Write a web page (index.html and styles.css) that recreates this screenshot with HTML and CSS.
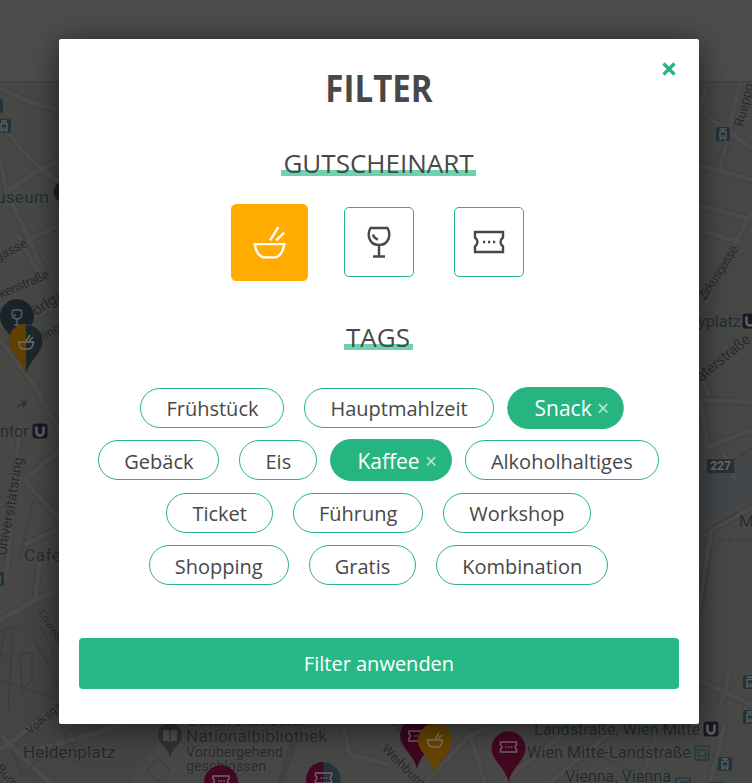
FILE: index.html
```html
<!DOCTYPE html>
<html lang="de">
<head>
<meta charset="utf-8">
<title>Filter</title>
<link rel="stylesheet" href="styles.css">
</head>
<body>
<svg class="map" width="752" height="783" viewBox="0 0 752 783" aria-hidden="true">
  <defs>
    <linearGradient id="bar" x1="0" y1="0" x2="0" y2="1"><stop offset="0" stop-color="#3c3c3c"/><stop offset="1" stop-color="#484847"/></linearGradient>
    <path id="pin" d="M0 34C-2 24-9 18-14 10A17 17 0 1 1 14 10C9 18 2 24 0 34Z"/>
    <g id="bowl" fill="none" stroke-width="1.5"><path d="M-7.500 0H7.500C7 4 5 7 2.500 7H-2.500C-5 7-7 4-7.500 0ZM0-1L4-7M3-1L7-5"/></g>
    <g id="glass" fill="none" stroke-width="1.4"><path d="M-4-7H4C6-3 5 2 0 2S-6-3-4-7ZM0 2V8M-3 8H3M-3-3Q-2-1-1-1"/></g>
    <g id="ticket" fill="none" stroke-width="1.5"><path d="M-8-5H8V-2Q5 0 8 2V5H-8V2Q-5 0-8-2Z"/><path d="M-3 0H4" stroke-dasharray="1.500 1.200"/></g>
    <g id="tram"><rect x="-7" y="-7" width="14" height="14" rx="2" fill="#22343a"/><path d="M-3-5H3M0-5V-3M-3-2.500H3V4H-3ZM-2 5L-3 6M2 5L3 6" stroke="#59605f" stroke-width="1.400" fill="none"/><path d="M-2 2H2" stroke="#59605f"/></g>
    <g id="metro"><rect x="-7.500" y="-7.500" width="15" height="15" rx="3" fill="#181a24"/><path d="M-3.500-4.500V1A3.500 3.500 0 0 0 3.500 1V-4.500" stroke="#606166" stroke-width="2.600" fill="none"/></g>
  </defs>
  <rect width="752" height="783" fill="#474746"/>
  <path d="M0 625L40 598L60 590V722L170 724L130 783H0Z" fill="#434543"/>
  <path d="M699 485L752 446V500L699 520Z" fill="#434648"/>
  <g class="road-edge">
    <path d="M0 88L28 101L60 111M7 130Q22 155 60 183M0 160L7 192L43 270M7 192L35 172L60 160M24 242L60 225M0 340L34 385L60 430M18 235L45 285M30 320L60 305M20 425L6 580M24 480L60 450M24 545L60 528M24 480L60 520M40 560L35 600L0 620M35 600L60 590M0 750L60 705L125 724M20 755L125 724M0 735L50 783"/>
    <path d="M708 82L699 110M699 110L752 148M699 165L752 180M699 205L752 220M699 230L740 242M752 210L672 370M740 82L720 170M699 400L752 402M699 450L752 430M708 450L700 400M722 450L735 480M711 530L699 620M699 680L752 705M721 705L729 675M710 530L752 508M699 370L709 395"/>
    <path d="M315 724L300 724L280 783M343 724L350 755L390 765M425 783L470 735L500 724M470 735L485 783M502 783L575 724M550 783L620 724M640 783L660 724M725 724L710 783"/>
  </g>
  <g class="road">
    <path d="M0 88L28 101L60 111M7 130Q22 155 60 183M0 160L7 192L43 270M7 192L35 172L60 160M24 242L60 225M0 340L34 385L60 430M18 235L45 285M30 320L60 305M20 425L6 580M24 480L60 450M24 545L60 528M24 480L60 520M40 560L35 600L0 620M35 600L60 590M0 750L60 705L125 724M20 755L125 724M0 735L50 783"/>
    <path d="M708 82L699 110M699 110L752 148M699 165L752 180M699 205L752 220M699 230L740 242M752 210L672 370M740 82L720 170M699 400L752 402M699 450L752 430M708 450L700 400M722 450L735 480M711 530L699 620M699 680L752 705M721 705L729 675M710 530L752 508M699 370L709 395"/>
    <path d="M343 724L350 755L390 765M425 783L470 735L500 724M470 735L485 783M502 783L575 724M550 783L620 724M640 783L660 724M725 724L710 783"/>
  </g>
  <path class="path" d="M0 632Q15 622 28 634T60 690M4 631L0 660M13 630L8 710M20 653H32V680L22 690ZM0 655Q12 650 10 668M33 630Q40 620 50 645T40 655ZM0 680L60 700M60 724L80 757M12 750L35 725L55 745L22 775ZM74 731Q80 735 75 742Q66 748 64 738Q66 730 74 731M147 770L158 758L170 770L158 782Z"/>
  <path class="dash" d="M60 425L42 400M60 470L38 485L56 505M33 500L20 560M720 540H752M565 740L600 783M590 750L650 783"/>
  <path d="M699 482L752 448M699 535L740 511M711 550L699 625" fill="none" stroke="#3d3d39" stroke-width="1.300"/>
  <path d="M17 407L26 402M21 401L26 402L23 407" fill="none" stroke="#343434" stroke-width="2"/>
  <g class="label">
    <text x="-4" y="203" class="l17 teal" textLength="53">useum</text>
    <text transform="translate(-13 267) rotate(-27)" class="l13">rggasse</text>
    <text transform="translate(-5 301) rotate(-23)" class="l13" textLength="60">irkenstraße</text>
    <text transform="translate(36 316) rotate(-32)" class="l15">örlgasse</text>
    <text transform="translate(44 341) rotate(-31)" class="l13">lingasse</text>
    <text x="0" y="437" class="l16 teal">ntor</text>
    <text transform="translate(6 556) rotate(-80)" class="l14">Universitätsring</text>
    <text x="24" y="561" class="l17 grey" textLength="37">Café</text>
    <text transform="translate(38 613) rotate(57)" class="l11">Löwelstraße</text>
    <text transform="translate(30 735) rotate(-40)" class="l12">Volksgarten</text>
    <text transform="translate(-5 769) rotate(48)" class="l13">Burgring</text>
    <text x="23" y="758" class="l17 green" textLength="92">Heldenplatz</text>
    <text x="186" y="726" class="l17 grey">Österreichische</text>
    <text x="186" y="742" class="l17 grey" textLength="141">Nationalbibliothek</text>
    <text x="186" y="757" class="l14 grey">Vorübergehend</text>
    <text x="186" y="771" class="l14 grey">geschlossen</text>
    <text transform="translate(381 750) rotate(44)" class="l13">Weihburggasse</text>
    <text transform="translate(391 724) rotate(35)" class="l13">straße</text>
    <text x="534" y="735" class="l16 teal" textLength="166">Landstraße, Wien Mitte</text>
    <text x="527" y="758" class="l16 teal" textLength="164">Wien Mitte-Landstraße</text>
    <text x="565" y="782" class="l16 teal" textLength="106">Vienna, Vienna</text>
    <text transform="translate(743 127) rotate(-76)" class="l13">Rueppgasse</text>
    <text transform="translate(705 301) rotate(-57)" class="l13" textLength="62">Zirkusgasse</text>
    <text x="698" y="327" class="l16 teal">yplatz</text>
    <text transform="translate(701 382) rotate(-39)" class="l15" textLength="65">aterstraße</text>
    <text x="739" y="527" class="l17 grey">Museum</text>
  </g>
  <rect x="707" y="459" width="27" height="14" fill="#263236"/><text x="720.500" y="470" class="route">227</text>
  <use href="#tram" x="4" y="126"/><use href="#tram" x="-4" y="106"/><use href="#tram" x="723" y="134"/>
  <use href="#tram" x="750" y="682"/><use href="#tram" x="750" y="717"/><use href="#tram" x="725" y="764"/><use href="#tram" x="-3" y="579"/>
  <use href="#metro" x="40" y="431"/><use href="#metro" x="750" y="321"/><use href="#metro" x="711" y="729"/>
  <g fill="none" stroke="#2b3d42" stroke-width="2"><rect x="695" y="746" width="14" height="14" rx="2"/><path d="M698 750H706V756H698ZM699 758V760M705 758V760"/><rect x="676" y="778" width="14" height="14" rx="2"/><path d="M680 782H687"/></g>
  <rect x="709" y="782" width="14" height="4" fill="#253a40"/>
  <circle cx="65" cy="192" r="11" fill="#17222a"/>
  <path d="M170 758C169 748 158 744 158 735A12 12 0 1 1 182 735C182 744 171 748 170 758Z" fill="#303131"/>
  <path d="M163 730Q167 729 169.500 731V742Q167 740 163 741ZM177 730Q173 729 170.500 731V742Q173 740 177 741Z" fill="#515252"/>
  <g stroke="#5b6265">
    <use href="#pin" x="17" y="316" fill="#18232a" stroke="none"/><use href="#glass" x="17" y="317"/>
    <use href="#pin" x="26" y="341" fill="#1d272e" stroke="#5d4b32" stroke-width=".6"/>
    <path d="M26 375C24 365 17 359 12 351A17 17 0 0 1 26 324Z" fill="#633f02" stroke="none"/><use href="#bowl" x="26" y="342" stroke="#777063"/>
  </g>
  <g stroke="#796170">
    <use href="#pin" x="417" y="735" fill="#3d061e" stroke="none"/><use href="#ticket" x="417" y="736"/>
    <use href="#pin" x="435" y="740" fill="#664500" stroke="none"/><use href="#bowl" x="435" y="740" stroke="#87755a"/>
    <use href="#pin" x="508.500" y="748" fill="#430820" stroke="none"/><use href="#ticket" x="508.500" y="747"/>
    <use href="#pin" x="221" y="782" fill="#430820" stroke="none"/><use href="#ticket" x="221" y="781"/>
    <use href="#pin" x="323.500" y="779" fill="#26333b" stroke="none"/><path d="M323.500 762A17 17 0 0 0 309.500 789H323.500Z" fill="#430820" stroke="none"/><use href="#ticket" x="323.500" y="778"/>
  </g>
  <rect width="752" height="81" fill="#4d4d4d"/>
  <rect y="81" width="752" height="3" fill="url(#bar)" opacity=".6"/>
</svg>
<main class="modal">
  <button class="close" aria-label="Schließen"><svg width="14" height="14" viewBox="0 0 14 14"><path d="M1.500 1.500L12.500 12.500M12.500 1.500L1.500 12.500"/></svg></button>
  <h1>FILTER</h1>
  <h2 class="kinds-title"><span>GUTSCHEINART</span></h2>
  <div class="kinds">
    <button class="kind active"><svg width="34" height="34" viewBox="0 0 34 34"><path d="M3.500 18.500H30.500C29.500 25 26 30.500 22 30.500H12C8 30.500 4.500 25 3.500 18.500ZM17.500 15L25 3M23 15L30.500 8"/></svg></button>
    <button class="kind"><svg width="34" height="34" viewBox="0 0 34 34"><path d="M8.500 3H25.500C29 9 27.500 20 17 20S5 9 8.500 3ZM17 20V31M11 31.500H23M11 9.500Q12 13.500 16 14.500"/></svg></button>
    <button class="kind"><svg width="34" height="34" viewBox="0 0 34 34"><path d="M3 7H31V12.500Q26 17 31 21.500V27H3V21.500Q8 17 3 12.500Z"/><path d="M11 17H13.200M16 17H18.200M21 17H23.200"/></svg></button>
  </div>
  <h2 class="tags-title"><span>TAGS</span></h2>
  <div class="tags">
    <div class="row"><button class="tag">Frühstück</button><button class="tag">Hauptmahlzeit</button><button class="tag on">Snack<i>×</i></button></div>
    <div class="row low"><button class="tag">Gebäck</button><button class="tag">Eis</button><button class="tag on">Kaffee<i>×</i></button><button class="tag">Alkoholhaltiges</button></div>
    <div class="row"><button class="tag">Ticket</button><button class="tag">Führung</button><button class="tag">Workshop</button></div>
    <div class="row low"><button class="tag">Shopping</button><button class="tag">Gratis</button><button class="tag">Kombination</button></div>
  </div>
  <button class="apply">Filter anwenden</button>
</main>
</body>
</html>
```
FILE: styles.css
```css
* { box-sizing: border-box; }
body {
  margin: 0;
  height: 783px;
  padding: 39px 53px 0 59px;
  overflow: hidden;
  background: #474746;
  color: #484848;
  font-family: "Open Sans", sans-serif;
}
button { font: inherit; color: inherit; background: none; border: 0; padding: 0; margin: 0; }
.map { position: absolute; left: 0; top: 0; }
.road-edge, .road, .path, .dash { fill: none; }
.road-edge { stroke: #414140; stroke-width: 7; }
.road { stroke: #4b4b4b; stroke-width: 5; }
.path { stroke: #393a39; stroke-width: 1; }
.dash { stroke: #3b3b3b; stroke-width: 1; stroke-dasharray: 5 3; }
.label { font-family: Roboto, sans-serif; fill: #292929; stroke: #4b4b4b; stroke-width: 1.5px; paint-order: stroke; }
.l11 { font-size: 11px; }
.l12 { font-size: 12px; }
.l13 { font-size: 13px; }
.l14 { font-size: 14.3px; }
.l15 { font-size: 15px; }
.l16 { font-size: 16.2px; }
.l17 { font-size: 17.3px; }
.teal { fill: #222d32; }
.green { fill: #202b27; }
.grey { fill: #2a2b2c; }
.route { font: bold 12px Roboto, sans-serif; text-anchor: middle; fill: #666a6b; }
.modal {
  position: relative;
  width: 640px;
  height: 685px;
  padding: 0 20px;
  background: #fff;
  border-radius: 2px;
  box-shadow: 0 4px 30px rgba(0, 0, 0, .6);
  text-align: center;
}
.close { position: absolute; left: 603px; top: 23px; width: 14px; height: 14px; }
.close svg { display: block; fill: none; stroke: #26b581; stroke-width: 3.2; }
h1 { margin: 0; padding-top: 21px; font-size: 38px; line-height: 54px; font-weight: 700; transform: scaleX(.87); }
h2 { margin: 0; font-size: 26px; line-height: 36px; font-weight: 400; }
h2 span { display: inline-block; padding: 0 2px; background: linear-gradient(#6dd2ad, #6dd2ad) 0 25px / 100% 6px no-repeat; }
.kinds-title { margin: 31px 1px 0 0; }
.kinds { display: flex; justify-content: center; gap: 40px; margin-top: 26px; }
.kind { display: grid; place-items: center; width: 70px; height: 70px; border: 1px solid #26b581; border-radius: 5px; }
.kind svg { fill: none; stroke: currentColor; stroke-width: 2.4; }
.kind.active { transform: translate(.5px, .5px) scale(1.1); background: #ffab00; border-color: #ffab00; color: #fff; }
.kind.active svg { stroke-width: 2.2; }
.tags-title { margin: 42px 1px 0 0; }
.tags-title span { padding: 0 3px 0 2px; }
.tags { display: grid; gap: 12.4px; margin: 33px 1px 0 0; }
.row { display: flex; justify-content: center; gap: 20px; height: 40px; }
.tag { height: 40px; padding: 0 25px; border: 1px solid #26b581; border-radius: 20px; font-size: 20px; line-height: 40px; }
.low .tag { padding-top: 1px; }
.tag.on { transform: scale(1.05); margin: 0 -4px; padding-right: 13px; background: #26b581; color: #fff; }
.tag i { margin-left: 5px; font-style: normal; font-size: 20px; opacity: .7; }
.apply { display: block; width: 600px; height: 51px; margin-top: 53px; border-radius: 4px; background: #26b985; color: #fff; font-size: 20px; }
```
